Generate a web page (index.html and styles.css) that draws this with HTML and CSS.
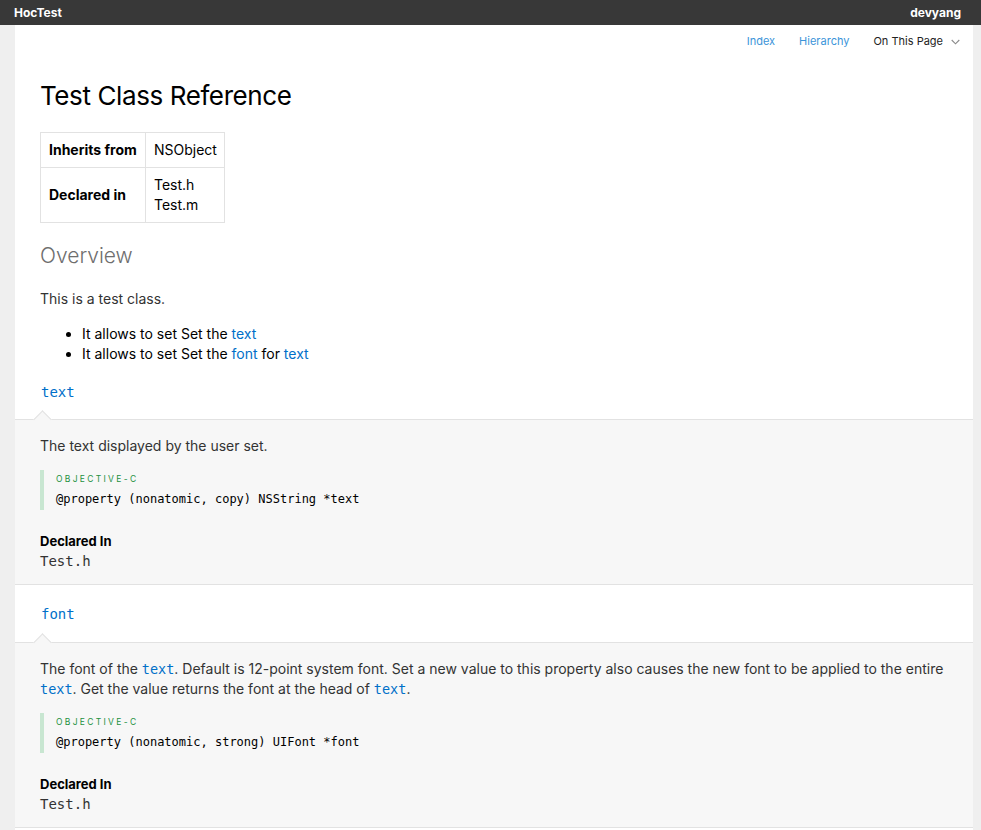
FILE: index.html
```html
<!DOCTYPE html>
<html lang="en">
<head>
<meta charset="utf-8">
<title>Test Class Reference</title>
<link rel="stylesheet" href="styles.css">
</head>
<body>
<header class="topbar">
  <span class="brand">HocTest</span>
  <span class="author">devyang</span>
</header>
<main class="page">
  <nav class="nav">
    <a class="nav-link" href="#">Index</a>
    <a class="nav-link" href="#">Hierarchy</a>
    <span class="nav-menu">On This Page
      <svg class="chev" width="9" height="6" viewBox="0 0 9 6"><path d="M0.7 1 L4.5 4.8 L8.3 1" fill="none" stroke="#8a8a8a" stroke-width="1.1"/></svg>
    </span>
  </nav>
  <div class="intro">
    <h1 class="title">Test Class Reference</h1>
    <table class="info">
      <tr><th>Inherits from</th><td>NSObject</td></tr>
      <tr><th>Declared in</th><td>Test.h<br>Test.m</td></tr>
    </table>
    <h2 class="overview">Overview</h2>
    <p class="para">This is a test class.</p>
    <ul class="list">
      <li>It allows to set Set the <a href="#">text</a></li>
      <li>It allows to set Set the <a href="#">font</a> for <a href="#">text</a></li>
    </ul>
  </div>

  <section class="prop">
    <div class="prop-head"><a class="mono-link" href="#">text</a></div>
    <div class="prop-body">
      <p class="para">The text displayed by the user set.</p>
      <div class="code">
        <div class="lang">OBJECTIVE-C</div>
        <code>@property (nonatomic, copy) NSString *text</code>
      </div>
      <div class="decl-label">Declared In</div>
      <div class="decl-file">Test.h</div>
    </div>
  </section>

  <section class="prop">
    <div class="prop-head"><a class="mono-link" href="#">font</a></div>
    <div class="prop-body">
      <p class="para">The font of the <a class="inline-mono" href="#">text</a>. Default is 12-point system font. Set a new value to this property also causes the new font to be applied to the entire <a class="inline-mono" href="#">text</a>. Get the value returns the font at the head of <a class="inline-mono" href="#">text</a>.</p>
      <div class="code">
        <div class="lang">OBJECTIVE-C</div>
        <code>@property (nonatomic, strong) UIFont *font</code>
      </div>
      <div class="decl-label">Declared In</div>
      <div class="decl-file">Test.h</div>
    </div>
  </section>
</main>
</body>
</html>
```
FILE: styles.css
```css
* { box-sizing: border-box; }
html, body { margin: 0; padding: 0; }
body {
  background: #efefef;
  font-family: "Inter", "Liberation Sans", sans-serif;
  color: #333;
  min-height: 830px;
}
a { color: #0070c9; text-decoration: none; }

.topbar {
  height: 25px;
  background: #383838;
  color: #fff;
  display: flex;
  justify-content: space-between;
  align-items: center;
  padding: 0 20px 0 14px;
  font-size: 12px;
  font-weight: 700;
}

.page {
  background: #fff;
  margin: 0 8px 0 15px;
  min-height: 805px;
}

.nav {
  display: flex;
  justify-content: flex-end;
  align-items: center;
  gap: 24px;
  padding: 0 13px 0 0;
  height: 32px;
  font-size: 11px;
}
.nav-link { color: #3b94d9; }
.nav-menu { color: #222; display: flex; align-items: center; gap: 8px; }
.chev { display: block; margin-top: 1px; }

.intro { padding: 0 25px; }
.title {
  margin: 21px 0 0;
  font-size: 26px;
  font-weight: 400;
  color: #000;
  line-height: 36px;
  letter-spacing: -0.4px;
}
.info {
  border-collapse: collapse;
  margin-top: 18px;
  font-size: 14px;
  color: #000;
}
.info th, .info td {
  border: 1px solid #e2e2e2;
  padding: 7px 7px 7px 8px;
  line-height: 20px;
  text-align: left;
  vertical-align: middle;
}
.info th { font-weight: 700; width: 105px; }
.info td { width: 79px; }

.overview {
  margin: 20px 0 0;
  font-size: 21px;
  font-weight: 300;
  color: #6e6e6e;
  line-height: 26px;
}
.para {
  margin: 0;
  font-size: 14px;
  line-height: 20px;
  color: #333;
}
.intro .para { margin-top: 20px; }
.list {
  margin: 15px 0 0;
  padding-left: 42px;
  font-size: 14px;
  line-height: 20px;
  color: #000;
}

.prop-head {
  position: relative;
  height: 58px;
  padding: 18px 25px 0;
  border-bottom: 1px solid #e2e2e2;
  background: #fff;
}
.intro + .prop .prop-head { height: 56px; padding-top: 17px; }
.prop-head::after {
  content: "";
  position: absolute;
  left: 21px;
  bottom: -7px;
  width: 12px;
  height: 12px;
  background: #f7f7f7;
  border-left: 1px solid #e2e2e2;
  border-top: 1px solid #e2e2e2;
  transform: rotate(45deg);
}
.mono-link, .inline-mono {
  font-family: "DejaVu Sans Mono", "Liberation Mono", monospace;
}
.mono-link { font-size: 14px; line-height: 20px; margin-left: 1px; }
.inline-mono { font-size: 13.5px; }

.prop-body {
  background: #f7f7f7;
  padding: 16px 25px 13px;
  border-bottom: 1px solid #e2e2e2;
}
.code {
  margin-top: 14px;
  border-left: 4px solid #c8e6d1;
  padding: 2px 0 2px 12px;
}
.lang {
  font-size: 8.5px;
  letter-spacing: 2.3px;
  color: #23913f;
  line-height: 14px;
}
.code code {
  display: block;
  margin-top: 4px;
  font-family: "DejaVu Sans Mono", "Liberation Mono", monospace;
  font-size: 12px;
  line-height: 18px;
  color: #000;
}
.decl-label {
  margin-top: 21px;
  font-size: 13px;
  font-weight: 700;
  color: #000;
  line-height: 20px;
}
.decl-file {
  font-family: "DejaVu Sans Mono", "Liberation Mono", monospace;
  font-size: 14px;
  line-height: 20px;
  color: #333;
}
```
